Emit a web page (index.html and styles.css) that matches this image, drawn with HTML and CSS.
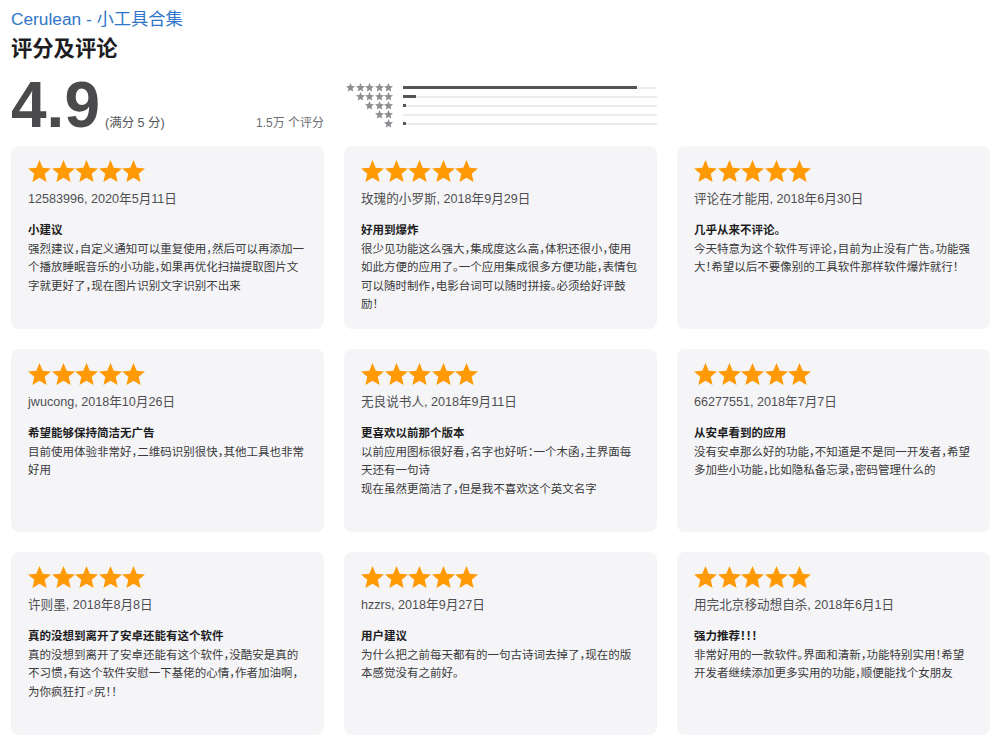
FILE: index.html
```html
<!DOCTYPE html>
<html lang="zh-CN">
<head>
<meta charset="utf-8">
<title>Cerulean - 小工具合集 评分及评论</title>
<link rel="stylesheet" href="styles.css">
</head>
<body>
<svg class="defs" width="0" height="0" aria-hidden="true">
  <defs>
    <path id="star" d="M12 17.27L18.18 21l-1.64-7.03L22 9.24l-7.19-.61L12 2 9.19 8.630 2 9.24l5.46 4.73L5.82 21z"/>
  </defs>
</svg>
<main class="page">
  <a class="app-link" href="#">Cerulean - 小工具合集</a>
  <h2 class="heading">评分及评论</h2>

  <section class="summary">
    <div class="score">
      <span class="score-value">4.9</span>
      <span class="score-max">(满分 5 分)</span>
      <span class="score-count">1.5万 个评分</span>
    </div>
    <div class="histogram">
      <div class="hist-row">
        <span class="hist-stars"><svg viewBox="2 2 20 19"><use href="#star"/></svg><svg viewBox="2 2 20 19"><use href="#star"/></svg><svg viewBox="2 2 20 19"><use href="#star"/></svg><svg viewBox="2 2 20 19"><use href="#star"/></svg><svg viewBox="2 2 20 19"><use href="#star"/></svg></span>
        <span class="hist-track"><span class="hist-fill" style="width:92%"></span></span>
      </div>
      <div class="hist-row">
        <span class="hist-stars"><svg viewBox="2 2 20 19"><use href="#star"/></svg><svg viewBox="2 2 20 19"><use href="#star"/></svg><svg viewBox="2 2 20 19"><use href="#star"/></svg><svg viewBox="2 2 20 19"><use href="#star"/></svg></span>
        <span class="hist-track"><span class="hist-fill" style="width:5%"></span></span>
      </div>
      <div class="hist-row">
        <span class="hist-stars"><svg viewBox="2 2 20 19"><use href="#star"/></svg><svg viewBox="2 2 20 19"><use href="#star"/></svg><svg viewBox="2 2 20 19"><use href="#star"/></svg></span>
        <span class="hist-track"><span class="hist-fill" style="width:1%"></span></span>
      </div>
      <div class="hist-row">
        <span class="hist-stars"><svg viewBox="2 2 20 19"><use href="#star"/></svg><svg viewBox="2 2 20 19"><use href="#star"/></svg></span>
        <span class="hist-track"><span class="hist-fill" style="width:0%"></span></span>
      </div>
      <div class="hist-row">
        <span class="hist-stars"><svg viewBox="2 2 20 19"><use href="#star"/></svg></span>
        <span class="hist-track"><span class="hist-fill" style="width:1%"></span></span>
      </div>
    </div>
  </section>

  <section class="reviews">
    <article class="card">
      <div class="stars"><svg viewBox="2 2 20 19"><use href="#star"/></svg><svg viewBox="2 2 20 19"><use href="#star"/></svg><svg viewBox="2 2 20 19"><use href="#star"/></svg><svg viewBox="2 2 20 19"><use href="#star"/></svg><svg viewBox="2 2 20 19"><use href="#star"/></svg></div>
      <p class="meta">12583996, 2020年5月11日</p>
      <h3 class="title">小建议</h3>
      <p class="body">强烈建议，自定义通知可以重复使用，然后可以再添加一个播放睡眠音乐的小功能，如果再优化扫描提取图片文字就更好了，现在图片识别文字识别不出来</p>
    </article>
    <article class="card">
      <div class="stars"><svg viewBox="2 2 20 19"><use href="#star"/></svg><svg viewBox="2 2 20 19"><use href="#star"/></svg><svg viewBox="2 2 20 19"><use href="#star"/></svg><svg viewBox="2 2 20 19"><use href="#star"/></svg><svg viewBox="2 2 20 19"><use href="#star"/></svg></div>
      <p class="meta">玫瑰的小罗斯, 2018年9月29日</p>
      <h3 class="title">好用到爆炸</h3>
      <p class="body">很少见功能这么强大，集成度这么高，体积还很小，使用如此方便的应用了。一个应用集成很多方便功能，表情包可以随时制作，电影台词可以随时拼接。必须给好评鼓励！</p>
    </article>
    <article class="card">
      <div class="stars"><svg viewBox="2 2 20 19"><use href="#star"/></svg><svg viewBox="2 2 20 19"><use href="#star"/></svg><svg viewBox="2 2 20 19"><use href="#star"/></svg><svg viewBox="2 2 20 19"><use href="#star"/></svg><svg viewBox="2 2 20 19"><use href="#star"/></svg></div>
      <p class="meta">评论在才能用, 2018年6月30日</p>
      <h3 class="title">几乎从来不评论。</h3>
      <p class="body">今天特意为这个软件写评论，目前为止没有广告。功能强大！希望以后不要像别的工具软件那样软件爆炸就行！</p>
    </article>
    <article class="card">
      <div class="stars"><svg viewBox="2 2 20 19"><use href="#star"/></svg><svg viewBox="2 2 20 19"><use href="#star"/></svg><svg viewBox="2 2 20 19"><use href="#star"/></svg><svg viewBox="2 2 20 19"><use href="#star"/></svg><svg viewBox="2 2 20 19"><use href="#star"/></svg></div>
      <p class="meta">jwucong, 2018年10月26日</p>
      <h3 class="title">希望能够保持简洁无广告</h3>
      <p class="body">目前使用体验非常好，二维码识别很快，其他工具也非常好用</p>
    </article>
    <article class="card">
      <div class="stars"><svg viewBox="2 2 20 19"><use href="#star"/></svg><svg viewBox="2 2 20 19"><use href="#star"/></svg><svg viewBox="2 2 20 19"><use href="#star"/></svg><svg viewBox="2 2 20 19"><use href="#star"/></svg><svg viewBox="2 2 20 19"><use href="#star"/></svg></div>
      <p class="meta">无良说书人, 2018年9月11日</p>
      <h3 class="title">更喜欢以前那个版本</h3>
      <p class="body">以前应用图标很好看，名字也好听：一个木函，主界面每天还有一句诗<br>现在虽然更简洁了，但是我不喜欢这个英文名字</p>
    </article>
    <article class="card">
      <div class="stars"><svg viewBox="2 2 20 19"><use href="#star"/></svg><svg viewBox="2 2 20 19"><use href="#star"/></svg><svg viewBox="2 2 20 19"><use href="#star"/></svg><svg viewBox="2 2 20 19"><use href="#star"/></svg><svg viewBox="2 2 20 19"><use href="#star"/></svg></div>
      <p class="meta">66277551, 2018年7月7日</p>
      <h3 class="title">从安卓看到的应用</h3>
      <p class="body">没有安卓那么好的功能，不知道是不是同一开发者，希望多加些小功能，比如隐私备忘录，密码管理什么的</p>
    </article>
    <article class="card">
      <div class="stars"><svg viewBox="2 2 20 19"><use href="#star"/></svg><svg viewBox="2 2 20 19"><use href="#star"/></svg><svg viewBox="2 2 20 19"><use href="#star"/></svg><svg viewBox="2 2 20 19"><use href="#star"/></svg><svg viewBox="2 2 20 19"><use href="#star"/></svg></div>
      <p class="meta">许则墨, 2018年8月8日</p>
      <h3 class="title">真的没想到离开了安卓还能有这个软件</h3>
      <p class="body">真的没想到离开了安卓还能有这个软件，没酷安是真的不习惯，有这个软件安慰一下基佬的心情，作者加油啊，为你疯狂打♂尻！！</p>
    </article>
    <article class="card">
      <div class="stars"><svg viewBox="2 2 20 19"><use href="#star"/></svg><svg viewBox="2 2 20 19"><use href="#star"/></svg><svg viewBox="2 2 20 19"><use href="#star"/></svg><svg viewBox="2 2 20 19"><use href="#star"/></svg><svg viewBox="2 2 20 19"><use href="#star"/></svg></div>
      <p class="meta">hzzrs, 2018年9月27日</p>
      <h3 class="title">用户建议</h3>
      <p class="body">为什么把之前每天都有的一句古诗词去掉了，现在的版本感觉没有之前好。</p>
    </article>
    <article class="card">
      <div class="stars"><svg viewBox="2 2 20 19"><use href="#star"/></svg><svg viewBox="2 2 20 19"><use href="#star"/></svg><svg viewBox="2 2 20 19"><use href="#star"/></svg><svg viewBox="2 2 20 19"><use href="#star"/></svg><svg viewBox="2 2 20 19"><use href="#star"/></svg></div>
      <p class="meta">用完北京移动想自杀, 2018年6月1日</p>
      <h3 class="title">强力推荐！！！</h3>
      <p class="body">非常好用的一款软件。界面和清新，功能特别实用！希望开发者继续添加更多实用的功能，顺便能找个女朋友</p>
    </article>
  </section>
</main>
</body>
</html>
```

FILE: styles.css
```css
html, body {
  margin: 0;
  padding: 0;
  background: #ffffff;
}

body {
  font-family: "Liberation Sans", "Noto Sans CJK SC", sans-serif;
  color: #1d1d1f;
}

.defs {
  position: absolute;
  width: 0;
  height: 0;
  overflow: hidden;
}

.page {
  width: 979px;
  padding: 9px 13px 0 11px;
  display: flex;
  flex-direction: column;
}

.app-link {
  font-size: 17.3px;
  line-height: 20px;
  color: #2f76c8;
  text-decoration: none;
  align-self: flex-start;
}

.heading {
  margin: 7px 0 0;
  font-size: 21.3px;
  line-height: 26px;
  font-weight: 600;
  color: #1d1d1f;
}

.summary {
  margin-top: 11px;
  display: grid;
  grid-template-columns: 313px 313px 313px;
  column-gap: 20px;
}

.score {
  display: flex;
  align-items: baseline;
}

.score-value {
  font-size: 64px;
  line-height: 64px;
  font-weight: 700;
  color: #4a4a4c;
}

.score-max {
  margin-left: 5px;
  font-size: 12.5px;
  color: #555558;
}

.score-count {
  margin-left: auto;
  font-size: 12px;
  color: #6e6e73;
}

.histogram {
  padding-top: 10px;
  display: flex;
  flex-direction: column;
}

.hist-row {
  height: 9px;
  display: flex;
  align-items: center;
}

.hist-stars {
  width: 49px;
  display: flex;
  justify-content: flex-end;
  gap: 0.4px;
}

.hist-stars svg {
  width: 9px;
  height: 8.6px;
  fill: #8e8e93;
}

.hist-track {
  margin-left: 10px;
  flex: 1;
  height: 2px;
  background: #ececee;
  display: flex;
}

.hist-fill {
  height: 3px;
  margin-top: -0.5px;
  background: #555558;
}

.reviews {
  margin-top: 9px;
  display: grid;
  grid-template-columns: 313px 313px 313px;
  grid-auto-rows: 183px;
  gap: 20px;
}

.card {
  background: #f5f5f7;
  border-radius: 8px;
  padding: 14px 17px;
  display: flex;
  flex-direction: column;
  overflow: hidden;
}

.stars {
  display: flex;
  gap: 0.6px;
  height: 22px;
}

.stars svg {
  width: 23px;
  height: 22px;
  fill: #ff9a05;
}

.meta {
  margin: 8px 0 0;
  font-size: 12.6px;
  line-height: 18px;
  color: #4f4f53;
}

.title {
  margin: 13px 0 0;
  font-size: 11.5px;
  line-height: 18.5px;
  font-weight: 600;
  color: #1d1d1f;
  font-feature-settings: "halt";
}

.body {
  margin: 0;
  font-size: 11.5px;
  line-height: 18.5px;
  color: #3a3a3c;
  font-feature-settings: "halt";
}
```
